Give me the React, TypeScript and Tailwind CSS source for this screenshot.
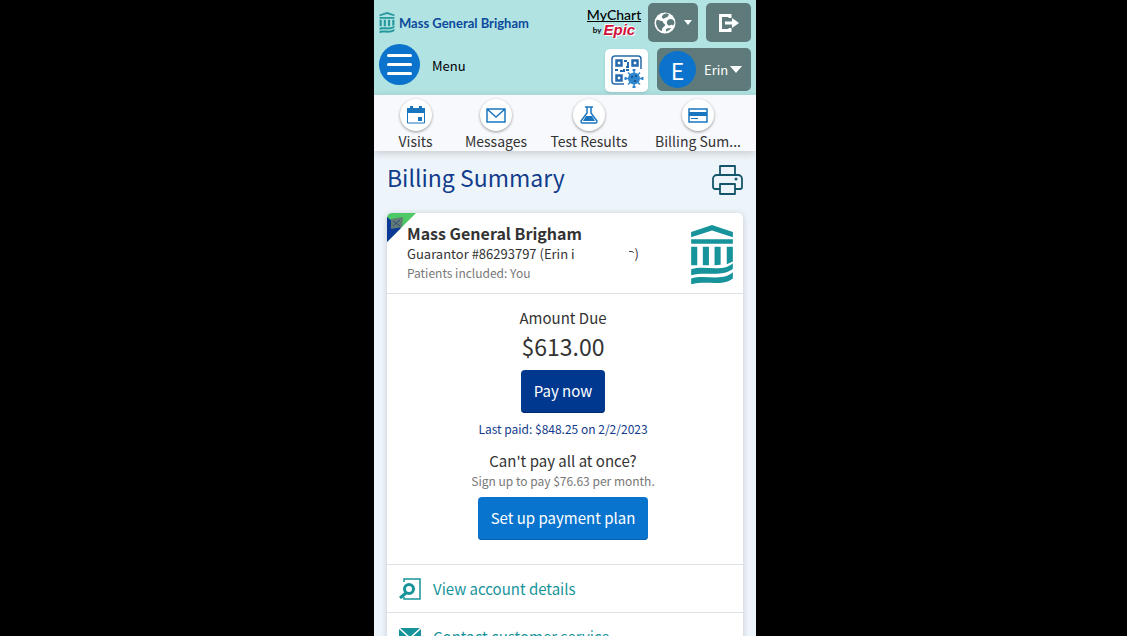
import React from 'react';

const sans = "font-['Noto_Sans_CJK_SC',sans-serif]";

const BuildingLogo: React.FC<{ className?: string }> = ({ className }) => (
  <svg className={className} viewBox="0 0 41 58" fill="currentColor" aria-hidden="true">
    <path d="M0 7L20.500 0 41 7v5L20.500 5.500 0 12z" />
    <path d="M0 14h41v4.500H0zM0 21.500h6v18H0zM11.500 21.500h6v18h-6zM23 21.500h6V39l-6 .500zM35 21.500h6V36l-6 2.500z" />
    <path d="M0 43.500C8 41 16 42.500 24 42.500S37 41 41 37.500V43c-5 4-11 5-18 5S8 47 0 49.500z" />
    <path d="M0 52.500C8 50 16 51.500 24 51.500S37 50 41 46.500v6c-5 4-11 4.500-18 4.500s-15-1-23 1.500z" />
  </svg>
);

const GlobeIcon: React.FC = () => (
  <svg width="22" height="22" viewBox="0 0 22 22" aria-hidden="true">
    <circle cx="11" cy="11" r="10.500" fill="#fff" />
    <path
      d="M2.500 8c2-1 3 1 5 1s1 2 3 3-1 3-2 4 0 3-1 3c-3-1-5-4-5.500-8zM10 2c2-1 4-.500 5 .500-1 1-1 3-3 3s-1 2-3 1-1-3 1-4.500zM14 8c2-2 5-1 6 1s0 5-2 4-2 2-4 0-1-4 0-5zM12 17c2-1 3-1 5-1-1 2-3 3-5 3.500z"
      fill="#5f7a7b"
    />
  </svg>
);

const LogoutIcon: React.FC = () => (
  <svg width="22" height="20" viewBox="0 0 22 20" aria-hidden="true">
    <path d="M12 5V2.500H2.500v15H12V15" fill="none" stroke="#fff" strokeWidth="3" />
    <path d="M7 8.500h7V5l7 5-7 5v-3.500H7z" fill="#fff" />
  </svg>
);

const QrIcon: React.FC = () => (
  <svg width="34" height="34" viewBox="0 0 34 34" fill="none" stroke="#2469ad" aria-hidden="true">
    <path d="M31 15V5a3 3 0 0 0-3-3H5a3 3 0 0 0-3 3v22a3 3 0 0 0 3 3h9" strokeWidth="1.500" />
    <path d="M6.500 6.500h5v5h-5zM22.500 6.500h5v5h-5zM6.500 21.500h5v5h-5z" strokeWidth="2.500" />
    <path d="M14 7h3M18 8v5h-2M5 16h3M10 17h4v-2M16 16h3" strokeWidth="2" />
    <path d="M24 16v17M15.500 24.500h17M18 18.500l12 12M30 18.500l-12 12" stroke="#2f86cd" strokeWidth="1.500" />
    <path d="M22.500 16h3M22.500 33h3M15.500 23v3M32.500 23v3" stroke="#2f86cd" strokeWidth="2" />
    <circle cx="24" cy="24.500" r="6" fill="#2f86cd" stroke="none" />
    <path d="M21 23h2M25 22h2M24 27h2" stroke="#14589c" strokeWidth="2" />
  </svg>
);

const MyChartLogo: React.FC = () => (
  <div className="flex w-[52px] flex-col items-center font-['Lato',sans-serif] text-black">
    <span className="border-b border-black text-[14px] leading-[13px] font-medium">MyChart</span>
    <span className="flex items-center gap-0.5">
      <span className="text-[8px] leading-3 font-bold">by</span>
      <span className="font-['Liberation_Sans',sans-serif] text-[15px] leading-[15px] font-bold text-[#d0103a] italic [text-shadow:0_0_1px_#fff,1px_1px_#fff,-1px_-1px_#fff]">
        Epic
      </span>
    </span>
  </div>
);

const shortcuts = [
  {
    label: 'Visits',
    width: 'w-[83px]',
    icon: (
      <>
        <path d="M1.500 4h17v14h-17z" fill="none" stroke="currentColor" />
        <path d="M1 3h18v5H1zM4 1h3v3H4zM13 1h3v3h-3zM12 12h4v4h-4z" />
      </>
    ),
  },
  {
    label: 'Messages',
    width: 'w-[78px]',
    icon: <path d="M1 4h18v13H1zM1 4l9 8 9-8" fill="none" stroke="currentColor" strokeWidth="1.500" />,
  },
  {
    label: 'Test Results',
    width: 'w-[108px]',
    icon: (
      <>
        <path d="M6 2h8M8 2v6l-6 8c0 1 0 2 1 2h14c1 0 1-1 1-2l-6-8V2" fill="none" stroke="currentColor" strokeWidth="1.500" />
        <path d="M7 11h6l3 5H4z" />
      </>
    ),
  },
  {
    label: 'Billing Sum...',
    width: 'w-[110px]',
    icon: (
      <>
        <path d="M1 4h18v13H1z" fill="none" stroke="currentColor" strokeWidth="1.500" />
        <path d="M1 7h18v4H1zM3 13h7v1H3z" />
      </>
    ),
  },
];

const Header: React.FC = () => (
  <header className="flex h-[95px] flex-col gap-1.5 bg-[#b1e3e3] px-[5px] pt-[3px]">
    <div className="flex h-[39px] items-center">
      <a href="#home" className="flex items-center gap-1 text-[#0b4a9b]">
        <BuildingLogo className="h-[21px] w-4 text-[#25989d]" />
        <span className="font-['Lato',sans-serif] text-[13px] leading-5 font-bold">Mass General Brigham</span>
      </a>
      <div className="ml-auto flex items-center gap-2">
        <MyChartLogo />
        <button className="flex h-[39px] w-[50px] items-center justify-center gap-2 rounded-[5px] bg-[#5f7a7b]" aria-label="Language">
          <GlobeIcon />
          <svg width="8" height="5" viewBox="0 0 8 5" fill="#fff"><path d="M0 0h8L4 5z" /></svg>
        </button>
        <button className="flex h-[39px] w-[45px] items-center justify-center rounded-[5px] bg-[#5f7a7b]" aria-label="Log out">
          <LogoutIcon />
        </button>
      </div>
    </div>
    <div className="flex items-start">
      <button className="-mt-1 flex items-center gap-3 text-[13px] leading-5 text-black">
        <span className="flex size-[41px] flex-col items-center justify-center gap-[6px] rounded-full bg-[#0b73cc]">
          <span className="h-[3px] w-[25px] rounded bg-white" />
          <span className="h-[3px] w-[25px] rounded bg-white" />
          <span className="h-[3px] w-[25px] rounded bg-white" />
        </span>
        <span className="pt-0.5">Menu</span>
      </button>
      <button className="mt-px ml-auto flex size-[43px] items-center justify-center rounded-[5px] bg-white shadow" aria-label="Health QR code">
        <QrIcon />
      </button>
      <button className="ml-[9px] flex h-[43px] w-[94px] items-center rounded-[5px] bg-[#5f7a7b] pl-0.5 text-[13px] leading-5 text-white">
        <span className="mr-2 flex size-[37px] items-center justify-center rounded-full bg-[#0b73cc] text-[23px]">E</span>
        Erin
        <svg className="ml-0.5" width="12" height="7" viewBox="0 0 12 7" fill="#fff"><path d="M0 0h12L6 7z" /></svg>
      </button>
    </div>
  </header>
);

const Shortcuts: React.FC = () => (
  <nav className="relative flex h-14 bg-[#f8f9fd] pt-1 shadow-[0_2px_8px_rgba(0,0,0,0.18)]">
    {shortcuts.map((s) => (
      <a key={s.label} href="#shortcut" className={`${s.width} flex flex-col items-center text-[14px] leading-5 text-[#333]`}>
        <span className="flex size-8 shrink-0 items-center justify-center rounded-full bg-white text-[#1b76c0] shadow-[0_1px_3px_rgba(0,0,0,0.4)]">
          <svg width="20" height="20" viewBox="0 0 20 20" fill="currentColor">{s.icon}</svg>
        </span>
        <span className="whitespace-nowrap">{s.label}</span>
      </a>
    ))}
  </nav>
);

const App: React.FC = () => (
  <div className={`${sans} flex h-screen justify-center overflow-hidden bg-black pl-[3px]`}>
    <div className="w-full max-w-[382px] bg-[#eef5fa]">
      <Header />
      <Shortcuts />
      <main className="px-[13px] pt-3">
        <div className="flex h-[50px] justify-between">
          <h1 className="text-[23px] leading-7 text-[#123c8c]">Billing Summary</h1>
          <button className="mt-0.5 h-[30px]" aria-label="Print">
            <svg width="31" height="30" viewBox="0 0 31 30" fill="none" stroke="#155569" strokeWidth="1.800" strokeLinejoin="round">
              <path d="M8 10V1h15v9M8 24H3a2 2 0 0 1-2-2v-8a4 4 0 0 1 4-4h21a4 4 0 0 1 4 4v8a2 2 0 0 1-2 2h-5" />
              <path d="M8 19h15v10H8z" />
              <circle cx="24" cy="14" r="0.600" fill="#155569" />
            </svg>
          </button>
        </div>
        <section className="relative rounded-[5px] bg-white shadow-[0_1px_6px_rgba(0,0,0,0.18)]">
          <svg className="absolute top-0 left-0 rounded-tl-[5px]" width="29" height="29" viewBox="0 0 29 29">
            <path d="M0 0h29L0 29z" fill="#4cc864" />
            <path d="M0 4l14 11L0 29z" fill="#0a3a96" />
            <path d="M4 6l12-2-1 10-11 2z" fill="#627c75" />
            <path d="M6 8l7 5M13 7l-7 6" stroke="#34507c" />
          </svg>
          <div className="flex h-20 justify-between pt-2.5 pr-2.5 pl-5">
            <div>
              <h2 className="text-[16px] leading-5 font-bold text-[#333]">Mass General Brigham</h2>
              <p className="flex text-[13px] leading-[22px] text-[#333]">
                Guarantor #86293797 (Erin i
                <svg className="mt-1.5 ml-13" width="8" height="6" viewBox="0 0 8 6" fill="none" stroke="#444">
                  <path d="M2 2.500h3.500l1 1.500" />
                </svg>
                <span>)</span>
              </p>
              <p className="text-[12px] leading-4 text-[#777]">Patients included: You</p>
            </div>
            <BuildingLogo className="mt-0.5 h-[59px] w-[42px] text-[#17949b]" />
          </div>
          <div className="flex h-[272px] flex-col items-center border-y border-[#dde1e5] pt-3 pr-1">
            <p className="text-[15px] leading-6 text-[#333]">Amount Due</p>
            <p className="text-[23px] leading-8 text-[#333]">$613.00</p>
            <button className="mt-2 h-[43px] w-[84px] rounded bg-[#00388f] text-[15px] text-white shadow-[inset_0_-1px_#002b70]">Pay now</button>
            <a href="#payments" className="mt-1 text-[12px] leading-6 text-[#123c8c]">Last paid: $848.25 on 2/2/2023</a>
            <p className="mt-2 text-[15px] leading-6 text-[#333]">Can't pay all at once?</p>
            <p className="text-[12px] leading-4 text-[#777]">Sign up to pay $76.63 per month.</p>
            <button className="mt-2 h-[43px] w-[170px] rounded bg-[#0874ce] text-[15px] text-white shadow-[inset_0_-1px_#0660ab]">Set up payment plan</button>
          </div>
          <a href="#details" className="flex h-12 items-center gap-3 border-b border-[#dde1e5] pl-3 text-[15px] leading-6 text-[#17949b]">
            <svg width="22" height="22" viewBox="0 0 22 22" fill="none" stroke="currentColor">
              <path d="M5 4V1h16v20H5v-2" strokeWidth="1.500" />
              <circle cx="10" cy="11" r="4.500" strokeWidth="3" />
              <path d="M7 15l-6 5" strokeWidth="3" />
            </svg>
            View account details
          </a>
          <a href="#contact" className="flex h-12 items-center gap-3 pl-3 text-[15px] leading-6 text-[#17949b]">
            <svg width="22" height="22" viewBox="0 0 22 22" fill="currentColor">
              <path d="M0 2h22v17H0z" />
              <path d="M0 2l11 10 11-10M0 19l8-8M22 19l-8-8" fill="none" stroke="#fff" strokeWidth="1.500" />
            </svg>
            Contact customer service
          </a>
        </section>
      </main>
    </div>
  </div>
);

export default App;
